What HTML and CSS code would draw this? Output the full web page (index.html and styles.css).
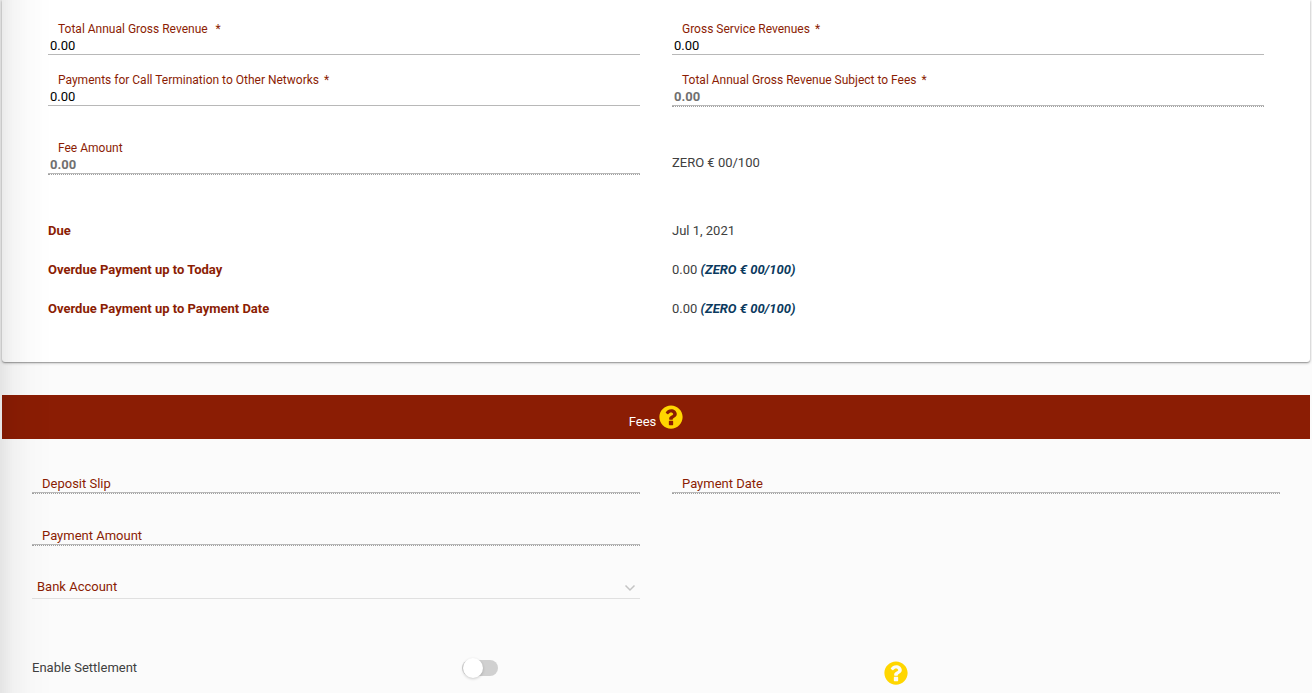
FILE: index.html
```
<!DOCTYPE html>
<html lang="en">
<head>
<meta charset="utf-8">
<title>Fees</title>
<link rel="stylesheet" href="styles.css">
</head>
<body>
<main class="page">
  <section class="card">
    <div class="grid">
      <div class="field">
        <label for="revenue">Total Annual Gross Revenue <span class="req spaced">*</span></label>
        <input id="revenue" type="text" value="0.00">
      </div>
      <div class="field">
        <label for="service">Gross Service Revenues <span class="req">*</span></label>
        <input id="service" type="text" value="0.00">
      </div>
      <div class="field">
        <label for="termination">Payments for Call Termination to Other Networks <span class="req">*</span></label>
        <input id="termination" type="text" value="0.00">
      </div>
      <div class="field disabled">
        <label for="subject">Total Annual Gross Revenue Subject to Fees <span class="req">*</span></label>
        <input id="subject" type="text" value="0.00" disabled>
      </div>
    </div>
    <div class="grid fee-row">
      <div class="field disabled">
        <label for="fee">Fee Amount</label>
        <input id="fee" type="text" value="0.00" disabled>
      </div>
      <p class="words">ZERO € 00/100</p>
    </div>
    <dl class="grid summary">
      <dt>Due</dt>
      <dd>Jul 1, 2021</dd>
      <dt>Overdue Payment up to Today</dt>
      <dd>0.00 <em>(ZERO € 00/100)</em></dd>
      <dt>Overdue Payment up to Payment Date</dt>
      <dd>0.00 <em>(ZERO € 00/100)</em></dd>
    </dl>
  </section>

  <h2 class="banner">
    <span>Fees</span>
    <svg class="help" viewBox="0 0 512 512" role="img" aria-label="Help"><path fill="currentColor" d="M504 256c0 137-111 248-248 248S8 393 8 256 119 8 256 8s248 111 248 248zM262.700 90c-54.500 0-89.300 23-116.500 63.800-3.500 5.300-2.400 12.400 2.700 16.300l34.700 26.300c5.200 3.900 12.600 3 16.700-2.100 17.900-22.700 30.100-35.800 57.300-35.800 20.400 0 45.700 13.100 45.700 33 0 15-12.400 22.700-32.500 34C247.100 238.500 216 254.900 216 296v4c0 6.600 5.400 12 12 12h56c6.600 0 12-5.400 12-12v-1.300c0-28.500 83.200-29.600 83.200-106.700 0-58-60.200-102-116.500-102zM222 338c-7 0-12 5-12 12v68c0 7 5 12 12 12h68c7 0 12-5 12-12v-68c0-7-5-12-12-12z"/></svg>
  </h2>

  <section class="fees">
    <div class="grid">
      <div class="field floating disabled">
        <label for="slip">Deposit Slip</label>
        <input id="slip" type="text" disabled>
      </div>
      <div class="field floating disabled">
        <label for="date">Payment Date</label>
        <input id="date" type="text" disabled>
      </div>
      <div class="field floating disabled">
        <label for="amount">Payment Amount</label>
        <input id="amount" type="text" disabled>
      </div>
      <div class="picker">
        <select aria-label="Bank Account"><option>Bank Account</option></select>
        <svg class="chevron" viewBox="0 0 12 8" aria-hidden="true"><path d="M1.500 1.500 6 6l4.500-4.500" fill="none" stroke="currentColor" stroke-width="1.500"/></svg>
      </div>
    </div>
    <div class="settlement">
      <label for="enable">Enable Settlement</label>
      <input id="enable" class="switch" type="checkbox" role="switch">
      <svg class="help" viewBox="0 0 512 512" role="img" aria-label="Help"><path fill="currentColor" d="M504 256c0 137-111 248-248 248S8 393 8 256 119 8 256 8s248 111 248 248zM262.700 90c-54.500 0-89.300 23-116.500 63.800-3.500 5.300-2.400 12.400 2.700 16.300l34.700 26.300c5.200 3.900 12.600 3 16.700-2.100 17.900-22.700 30.100-35.800 57.300-35.800 20.400 0 45.700 13.100 45.700 33 0 15-12.400 22.700-32.500 34C247.100 238.500 216 254.900 216 296v4c0 6.600 5.400 12 12 12h56c6.600 0 12-5.400 12-12v-1.300c0-28.500 83.200-29.600 83.200-106.700 0-58-60.200-102-116.500-102zM222 338c-7 0-12 5-12 12v68c0 7 5 12 12 12h68c7 0 12-5 12-12v-68c0-7-5-12-12-12z"/></svg>
    </div>
  </section>
</main>
</body>
</html>
```
FILE: styles.css
```
* { box-sizing: border-box; }

body {
  margin: 0;
  background: #fbfbfb;
  color: #404040;
  font: 13px/20px Roboto, sans-serif;
}

/* Shade cast by the side panel on the left edge */
body::before {
  content: "";
  position: fixed;
  inset: 0 auto 0 0;
  width: 52px;
  background: linear-gradient(90deg, rgba(0,0,0,.09), rgba(0,0,0,.04) 25%, rgba(0,0,0,.01) 60%, rgba(0,0,0,0));
  pointer-events: none;
  z-index: 1;
}

.page { padding: 0 2px; }

.card {
  padding: 21px 46px 43px;
  background: #fff;
  border-radius: 0 0 3px 3px;
  box-shadow: 0 1px 3px rgba(0,0,0,.3), 0 1px 1px rgba(0,0,0,.2);
}

.grid {
  display: grid;
  grid-template-columns: 1fr 1fr;
  column-gap: 32px;
  row-gap: 16px;
}

.field {
  display: flex;
  flex-direction: column;
  height: 35px;
}

.field label {
  padding-left: 10px;
  color: #8b1d04;
  font-size: 12px;
  line-height: 16px;
}

.req { margin-left: 2px; }

.req.spaced { margin-left: 5px; }

.field input {
  width: 100%;
  height: 18px;
  padding: 0 2px;
  border: 0;
  border-bottom: 1px solid #b8b8b8;
  background: transparent;
  color: #000;
  font: 13px/17px Roboto, sans-serif;
}

.field input:disabled {
  color: #707070;
  font-weight: 700;
}

.disabled { border-bottom: 1px dotted #a0a0a0; }

.fee-row { margin-top: 33px; }

.words { margin: 13px 0 0; }

.summary {
  margin: 46px 0 0;
  row-gap: 19px;
}

.summary dt {
  color: #8b1d04;
  font-weight: 700;
}

.summary dd { margin: 0; }

.summary em {
  color: #0b3a5e;
  font-weight: 700;
}

.banner {
  display: flex;
  justify-content: center;
  gap: 3px;
  height: 44px;
  margin: 33px 0 0;
  padding-top: 10px;
  background: #8b1d04;
  color: #fff;
  font-size: 13px;
  font-weight: 400;
}

.banner span { padding-top: 7px; }

.help {
  width: 24px;
  height: 24px;
  color: #ffd600;
}

.fees { padding: 34px 30px 0; }

.fees .grid { row-gap: 31px; }

.floating {
  display: grid;
  grid-template-rows: 20px;
  height: 21px;
}

.floating label,
.floating input { grid-area: 1 / 1; }

.floating label {
  font-size: 13px;
  line-height: 22px;
}

.floating input { height: 20px; }

.picker {
  display: grid;
  grid-column: 1;
  align-items: center;
  height: 22px;
  border-bottom: 1px solid #e0e0e0;
}

.picker select,
.chevron { grid-area: 1 / 1; }

.picker select {
  align-self: start;
  width: 100%;
  height: 19px;
  padding: 0 5px;
  border: 0;
  appearance: none;
  background: transparent;
  color: #8b1d04;
  font: 13px/19px Roboto, sans-serif;
}

.chevron {
  justify-self: end;
  width: 12px;
  height: 8px;
  margin-right: 4px;
  color: #c4c4c4;
  pointer-events: none;
}

.settlement {
  display: grid;
  grid-template-columns: repeat(3, 1fr);
  align-items: start;
  margin-top: 59px;
}

.switch {
  appearance: none;
  display: flex;
  align-items: center;
  width: 36px;
  height: 16px;
  margin: 2px 0 0 14px;
  border-radius: 8px;
  background: #d0d0d0;
}

.switch::before {
  content: "";
  flex: none;
  width: 20px;
  height: 20px;
  margin-left: 1px;
  border-radius: 50%;
  background: #fff;
  box-shadow: 0 1px 3px rgba(0,0,0,.2);
}

.switch:checked { justify-content: flex-end; }

.settlement .help { margin: 3px 0 0 20px; }
```
